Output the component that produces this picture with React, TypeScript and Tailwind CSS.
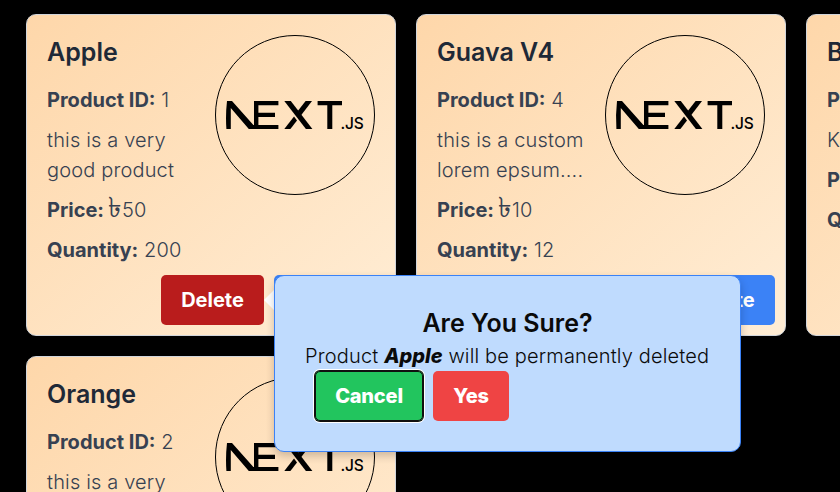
import type { ReactNode } from "react";

type Product = {
  id: number;
  name: string;
  description: string;
  price: number;
  quantity: number;
};

const products: Product[] = [
  { id: 1, name: "Apple", description: "this is a very good product", price: 50, quantity: 200 },
  { id: 4, name: "Guava V4", description: "this is a custom lorem epsum....", price: 10, quantity: 12 },
  { id: 3, name: "Banana", description: "Kola", price: 10, quantity: 50 },
  { id: 2, name: "Orange", description: "this is a very good product", price: 50, quantity: 200 },
];

function NextLogo() {
  return (
    <svg viewBox="0 0 160 160" className="size-40 shrink-0 text-black" fill="currentColor">
      <circle cx="80" cy="80" r="79.5" fill="none" stroke="currentColor" strokeWidth="1" />
      <path d="M12 66H17L38.4 90H63.4V94H33.8L15.8 73V94H11.4Q10.4 80 12 66Z" />
      <path d="M39 66H63.4V70.2H43.4V77.7H60V82H43.4V94H39Z" />
      <path d="M69.3 66H75.8L97.4 94H90.9Z" />
      <path d="M90.6 66H97L86.1 80.2L82.8 76Z" />
      <path d="M69.3 94H75.4L82 85.4L79 81.4Z" />
      <path d="M102.6 66H127V70.2H117.3V94H112.3V70.2H102.6Z" />
      <text x="125.4" y="93.8" fontSize="15.5" fontWeight="540" fontFamily="Inter, sans-serif" textLength="23.6">
        .JS
      </text>
    </svg>
  );
}

function Button({ className, children }: { className: string; children: ReactNode }) {
  return (
    <button className={`h-[50px] rounded-[5px] text-center font-bold tracking-normal text-white ${className}`}>
      {children}
    </button>
  );
}

function ConfirmPopup({ name }: { name: string }) {
  return (
    <div className="absolute top-0 left-full z-10 ml-2.5 w-[467px] text-[#0a0a0a]">
      <span className="absolute top-[15px] -left-2.5 size-0 border-y-10 border-r-10 border-y-transparent border-r-white" />
      <div className="relative h-[177px] rounded-[10px] border border-[#3b82f6] bg-[#bfdbfe] p-[30px] shadow-[0_4px_8px_rgba(0,0,0,0.2)]">
        <h2 className="text-center text-[25px] leading-[35px] font-semibold tracking-normal">Are You Sure?</h2>
        <p className="whitespace-nowrap">
          Product <strong className="font-extrabold tracking-normal italic">{name}</strong> will be permanently deleted
        </p>
        <div className="ml-2.5 flex gap-2.5">
          <Button className="w-[108px] bg-[#22c55e] font-extrabold shadow-[0_0_0_1px_#101010,0_0_0_2px_#fff] outline-1 -outline-offset-1 outline-[#101010]">
            <span className="tracking-[-0.2px]">Cancel</span>
          </Button>
          <Button className="w-[76px] bg-[#ef4444] font-extrabold">
            <span className="tracking-[-0.2px]">Yes</span>
          </Button>
        </div>
      </div>
    </div>
  );
}

function ProductCard({ product, confirming }: { product: Product; confirming: boolean }) {
  return (
    <article className="flex h-[322px] w-[370px] flex-col rounded-[10px] border border-[#d1d5db] bg-linear-to-br/srgb from-[#fed7aa] to-[#ffedd5] text-[#374151]">
      <div className="flex justify-between pt-5 pr-5 pl-5">
        <div className="w-[155px] space-y-2.5">
          <h2 className="mb-[15px] text-[25px] leading-[35px] font-semibold tracking-normal text-[#1f2937]">
            {product.name}
          </h2>
          <p><b className="font-bold tracking-normal">Product ID:</b> {product.id}</p>
          <p>{product.description}</p>
          <p className="flex">
            <b className="mr-1 font-bold tracking-normal">Price:</b>
            <span className="inline-block w-3.5 origin-[0_70%] scale-x-[1.35] scale-y-[1.4] font-light tracking-normal">৳</span>
            {product.price}
          </p>
          <p><b className="font-bold tracking-normal">Quantity:</b> {product.quantity}</p>
        </div>
        <NextLogo />
      </div>
      <div className="mt-auto flex justify-end gap-2.5 pr-2.5 pb-2.5">
        <div className="relative">
          <Button className="w-[103px] bg-[#b91c1c]">Delete</Button>
          {confirming && <ConfirmPopup name={product.name} />}
        </div>
        <Button className="w-[111px] bg-[#3b82f6]">Update</Button>
      </div>
    </article>
  );
}

export default function App() {
  return (
    <main className="h-[492px] w-[840px] overflow-hidden bg-black pt-3.5 pl-[26px] font-['Inter',sans-serif] text-[20px] leading-[30px] font-[350] tracking-[0.16px]">
      <div className="grid w-max grid-cols-3 gap-5">
        {products.map((product) => (
          <ProductCard key={product.id} product={product} confirming={product.id === 1} />
        ))}
      </div>
    </main>
  );
}
